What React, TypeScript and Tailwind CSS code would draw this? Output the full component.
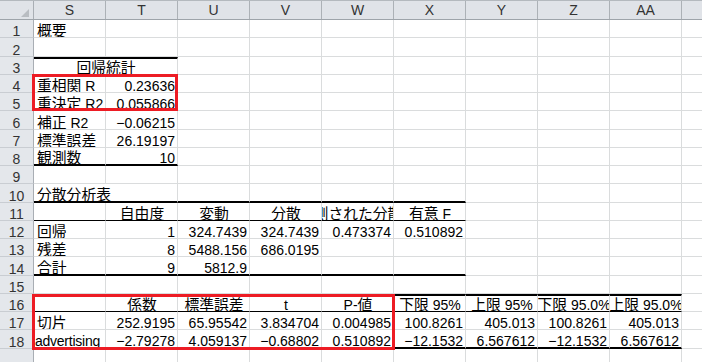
import React from 'react';

type Align = 'l' | 'r' | 'c';
type Cell = { t: string; a?: Align; span?: number; tight?: boolean } | null;
type Row = {
  n: number;
  h: 18 | 19;
  cells: Cell[];
  top?: number; // thick top border over first N columns
  bottom?: [number, 'thin' | 'thick']; // bottom border over first N columns
  hideNum?: boolean;
};

const COLS = ['S', 'T', 'U', 'V', 'W', 'X', 'Y', 'Z', 'AA'];

const L = (t: string): Cell => ({ t, a: 'l' });
const R = (t: string): Cell => ({ t, a: 'r' });
const C = (t: string): Cell => ({ t, a: 'c' });

const ROWS: Row[] = [
  { n: 1, h: 18, cells: [L('概要')] },
  { n: 2, h: 19, cells: [] },
  { n: 3, h: 18, cells: [{ t: '回帰統計', a: 'c', span: 2 }], top: 2, bottom: [2, 'thin'] },
  { n: 4, h: 18, cells: [L('重相関 R'), R('0.23636')] },
  { n: 5, h: 18, cells: [L('重決定 R2'), R('0.055866')] },
  { n: 6, h: 19, cells: [L('補正 R2'), R('−0.06215')] },
  { n: 7, h: 18, cells: [L('標準誤差'), R('26.19197')] },
  { n: 8, h: 18, cells: [L('観測数'), R('10')], bottom: [2, 'thick'] },
  { n: 9, h: 18, cells: [] },
  // the title spills over into the empty T cell, as Excel does
  { n: 10, h: 19, cells: [{ t: '分散分析表', a: 'l', span: 2 }], bottom: [6, 'thick'] },
  {
    n: 11,
    h: 18,
    cells: [null, C('自由度'), C('変動'), C('分散'), C('観測された分散比'), C('有意 F')],
    bottom: [6, 'thin'],
  },
  { n: 12, h: 18, cells: [L('回帰'), R('1'), R('324.7439'), R('324.7439'), R('0.473374'), R('0.510892')] },
  { n: 13, h: 18, cells: [L('残差'), R('8'), R('5488.156'), R('686.0195')] },
  { n: 14, h: 19, cells: [L('合計'), R('9'), R('5812.9')], bottom: [6, 'thick'] },
  { n: 15, h: 18, cells: [] },
  {
    n: 16,
    h: 18,
    cells: [
      null,
      C('係数'),
      C('標準誤差'),
      C('t'),
      C('P-値'),
      C('下限 95%'),
      C('上限 95%'),
      C('下限 95.0%'),
      C('上限 95.0%'),
    ],
    top: 9,
    bottom: [9, 'thin'],
  },
  {
    n: 17,
    h: 18,
    cells: [
      L('切片'),
      R('252.9195'),
      R('65.95542'),
      R('3.834704'),
      R('0.004985'),
      R('100.8261'),
      R('405.013'),
      R('100.8261'),
      R('405.013'),
    ],
  },
  {
    n: 18,
    h: 19,
    cells: [
      { t: 'advertising', a: 'l', tight: true },
      R('−2.79278'),
      R('4.059137'),
      R('−0.68802'),
      R('0.510892'),
      R('−12.1532'),
      R('6.567612'),
      R('−12.1532'),
      R('6.567612'),
    ],
    bottom: [9, 'thick'],
  },
  { n: 19, h: 18, cells: [], hideNum: true },
];

const H: Record<number, string> = { 18: 'h-[18px]', 19: 'h-[19px]' };
const JUSTIFY: Record<Align, string> = { l: 'justify-start', r: 'justify-end', c: 'justify-center' };

// CJK glyphs in the sheet font are a touch larger than the Latin digits
function Text({ t, tight }: { t: string; tight?: boolean }) {
  const parts = t.split(/([\u3040-\u30ff\u4e00-\u9fff]+)/).filter(Boolean);
  return (
    <span className={`leading-[12px] ${tight ? 'tracking-[-0.25px]' : ''}`}>
      {parts.map((p, i) =>
        /[\u3040-\u30ff\u4e00-\u9fff]/.test(p) ? (
          <span key={i} className="text-[14.8px]">
            {p}
          </span>
        ) : (
          <React.Fragment key={i}>{p}</React.Fragment>
        )
      )}
    </span>
  );
}

function SheetRow({ row }: { row: Row }) {
  const out: React.ReactNode[] = [];
  let i = 0;
  while (i < COLS.length) {
    const cell = row.cells[i] ?? null;
    const span = cell?.span ?? 1;
    const thickTop = row.top !== undefined && i < row.top;
    let bottom = 'border-b border-b-[#dadcdd]';
    if (row.bottom && i < row.bottom[0]) {
      bottom = row.bottom[1] === 'thick' ? 'border-b-2 border-b-black' : 'border-b border-b-black';
    }
    out.push(
      <div
        key={i}
        className={`flex shrink-0 items-end overflow-hidden whitespace-nowrap border-r border-r-[#dadcdd] pr-[2px] ${
          cell?.tight ? 'pl-[1px]' : 'pl-[3px]'
        } ${span === 2 ? 'w-[144px]' : 'w-[72px]'} ${bottom} ${thickTop ? 'border-t-2 border-t-black' : ''} ${
          cell ? JUSTIFY[cell.a ?? 'l'] : ''
        }`}
      >
        {cell && <Text t={cell.t} tight={cell.tight} />}
      </div>
    );
    i += span;
  }

  return (
    <div className={`flex shrink-0 ${H[row.h]}`}>
      <div className="flex w-[34px] shrink-0 items-end justify-center border-r border-b border-r-[#a9aeb4] border-b-[#c9cdd2] bg-[#e4e7eb] text-[#333]">
        {!row.hideNum && <span className="leading-[12px]">{row.n}</span>}
      </div>
      {out}
      <div className="flex-1 border-b border-b-[#dadcdd]" />
    </div>
  );
}

export default function App() {
  return (
    <div className="relative h-[362px] w-[702px] overflow-hidden bg-white text-[14px] text-black [font-family:'Liberation_Sans','Noto_Sans_CJK_JP',sans-serif]">
      {/* Column headers */}
      <div className="flex h-[20px] border-t border-b border-t-[#b4b9be] border-b-[#9ea4aa] bg-[#e0e3e8]">
        <div className="relative w-[34px] shrink-0 border-r border-r-[#a9aeb4]">
          <svg className="absolute right-[4px] bottom-[2px]" width="8" height="8" viewBox="0 0 8 8">
            <polygon points="8,0 8,8 0,8" fill="#b9bdc2" />
          </svg>
        </div>
        {COLS.map((c) => (
          <div
            key={c}
            className="flex w-[72px] shrink-0 items-center justify-center border-r border-r-[#acb1b6] text-[#333]"
          >
            {c}
          </div>
        ))}
        <div className="flex-1" />
      </div>

      {/* Cells */}
      {ROWS.map((row) => (
        <SheetRow key={row.n} row={row} />
      ))}

      {/* Red annotation boxes */}
      <div className="absolute left-[32px] top-[74px] h-[37px] w-[146px] border-[3px] border-[#ed1c24]" />
      <div className="absolute left-[32px] top-[294px] h-[56px] w-[363px] border-[3px] border-[#ed1c24]" />
    </div>
  );
}
